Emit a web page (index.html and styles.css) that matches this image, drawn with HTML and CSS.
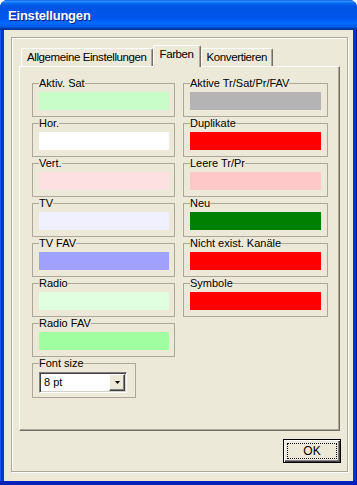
FILE: index.html
```html
<!DOCTYPE html>
<html lang="de">
<head>
  <meta charset="UTF-8">
  <meta name="viewport" content="width=device-width, initial-scale=1.0">
  <title>Einstellungen</title>
  <link rel="stylesheet" href="styles.css">
</head>
<body>
  <div class="window">
    <div class="titlebar"><span class="title">Einstellungen</span></div>
    <div class="client">
      <div class="frame">
        <div class="tabs">
          <div class="tab">Allgemeine Einstellungen</div>
          <div class="tab active">Farben</div>
          <div class="tab">Konvertieren</div>
        </div>
        <div class="page">
          <div class="column left">
            <fieldset class="group"><legend>Aktiv. Sat</legend><div class="swatch pale-green"></div></fieldset>
            <fieldset class="group"><legend>Hor.</legend><div class="swatch white"></div></fieldset>
            <fieldset class="group"><legend>Vert.</legend><div class="swatch pale-pink"></div></fieldset>
            <fieldset class="group"><legend>TV</legend><div class="swatch pale-blue"></div></fieldset>
            <fieldset class="group"><legend>TV FAV</legend><div class="swatch blue"></div></fieldset>
            <fieldset class="group"><legend>Radio</legend><div class="swatch mint"></div></fieldset>
            <fieldset class="group"><legend>Radio FAV</legend><div class="swatch green"></div></fieldset>
            <fieldset class="group font-size">
              <legend>Font size</legend>
              <div class="combo">
                <span class="combo-value">8 pt</span>
                <span class="drop">
                  <svg width="5" height="3" viewBox="0 0 5 3"><polygon points="0,0 5,0 2.5,3" fill="#000"/></svg>
                </span>
              </div>
            </fieldset>
          </div>
          <div class="column right">
            <fieldset class="group"><legend>Aktive Tr/Sat/Pr/FAV</legend><div class="swatch grey"></div></fieldset>
            <fieldset class="group"><legend>Duplikate</legend><div class="swatch red"></div></fieldset>
            <fieldset class="group"><legend>Leere Tr/Pr</legend><div class="swatch rose"></div></fieldset>
            <fieldset class="group"><legend>Neu</legend><div class="swatch dark-green"></div></fieldset>
            <fieldset class="group"><legend>Nicht exist. Kanäle</legend><div class="swatch red"></div></fieldset>
            <fieldset class="group"><legend>Symbole</legend><div class="swatch red"></div></fieldset>
          </div>
        </div>
        <div class="buttons">
          <button class="btn default"><span>OK</span></button>
        </div>
      </div>
    </div>
  </div>
</body>
</html>
```

FILE: styles.css
```css
* {
  box-sizing: border-box;
  margin: 0;
  padding: 0;
}
body {
  background: #fff;
  font-family: "Liberation Sans", Arial, sans-serif;
  font-size: 11px;
  color: #000;
}
.window {
  width: 357px;
  height: 485px;
  display: flex;
  flex-direction: column;
  background: #0831d9;
  border-bottom: 4px solid #0022b8;
  border-radius: 8px 8px 0 0;
  box-shadow: inset 1px 0 0 #0a5de8, inset -1px 0 0 #001ea0;
}
.titlebar {
  height: 30px;
  flex: none;
  padding: 8px 0 0 8px;
  border-radius: 8px 8px 0 0;
  background: linear-gradient(to bottom, #0058ee 0%, #3593ff 4%, #288eff 6%, #127dff 8%, #036ffc 10%, #0262ee 14%, #0057e5 20%, #0054e3 24%, #0055eb 56%, #005bf5 66%, #026afe 76%, #0062ef 86%, #0052d6 92%, #0040ab 94%, #003092 100%);
}
.title {
  color: #fff;
  font-weight: bold;
  font-size: 13px;
  line-height: 16px;
  letter-spacing: -0.2px;
  text-shadow: 1px 1px 0 #0f1e8c;
}
.client {
  flex: 1;
  margin: 0 4px;
  background: #ece9d8;
  padding: 7px 0 0 7px;
}
.frame {
  width: 337px;
  height: 435px;
  padding: 7px 7px 8px 7px;
  border: 1px solid #aca899;
  box-shadow: inset 1px 1px 0 #fff, 1px 1px 0 #fff;
  display: flex;
  flex-direction: column;
}
.tabs {
  display: flex;
  align-items: flex-end;
  height: 21px;
  flex: none;
  padding-left: 2px;
}
.tab {
  height: 18px;
  padding: 0 5px;
  border: 1px solid;
  border-color: #fff #716f64 transparent #fff;
  border-bottom: none;
  border-radius: 2px 2px 0 0;
  box-shadow: inset -1px 0 0 #aca899;
  font-size: 11.5px;
  line-height: 16px;
  letter-spacing: -0.4px;
  white-space: nowrap;
}
.tab.active {
  position: relative;
  z-index: 1;
  height: 22px;
  margin-bottom: -1px;
  padding: 0 6px;
  background: #ece9d8;
  line-height: 17px;
}
.page {
  flex: none;
  height: 365px;
  border: 1px solid;
  border-color: #fff #716f64 #716f64 #fff;
  box-shadow: inset -1px -1px 0 #aca899;
  padding: 10px 0 0 12px;
  display: grid;
  grid-template-columns: 143px 145px;
  column-gap: 8px;
  align-items: start;
}
.column {
  display: flex;
  flex-direction: column;
}
.group {
  border: 1px solid #aca899;
  padding: 2px 5px 6px 6px;
  min-width: 0;
}
.right .group {
  padding-right: 6px;
}
.group legend {
  padding: 0;
  line-height: 13px;
  white-space: nowrap;
}
.swatch {
  height: 18px;
}
.pale-green { background: #c8fcc8; }
.white { background: #fff; }
.pale-pink { background: #fde0e0; }
.pale-blue { background: #f0f0fe; }
.blue { background: #a0a0fe; }
.mint { background: #e0fee0; }
.green { background: #a0fea0; }
.grey { background: #b4b4b4; }
.red { background: #fe0000; }
.rose { background: #fec8c8; }
.dark-green { background: #008000; }

.font-size {
  width: 104px;
  padding-bottom: 4px;
}
.combo {
  display: flex;
  align-items: stretch;
  width: 88px;
  height: 21px;
  background: #fff;
  border: 1px solid;
  border-color: #808080 #fff #fff #808080;
  box-shadow: inset 1px 1px 0 #404040, inset -1px -1px 0 #d4d0c8;
  padding: 1px;
}
.combo-value {
  flex: 1;
  padding-left: 3px;
  line-height: 17px;
}
.drop {
  width: 16px;
  display: flex;
  align-items: center;
  justify-content: center;
  background: #ece9d8;
  border: 1px solid;
  border-color: #fff #404040 #404040 #fff;
  box-shadow: inset -1px -1px 0 #808080;
}
.drop svg {
  display: block;
}
.buttons {
  display: flex;
  justify-content: flex-end;
  margin-top: 8px;
  margin-right: -1px;
}
.btn {
  width: 58px;
  height: 24px;
  padding: 3px;
  border: 1px solid #000;
  background: #ece9d8;
  box-shadow: inset 1px 1px 0 #fff, inset -1px -1px 0 #404040, inset -2px -2px 0 #808080;
  font: inherit;
  font-size: 12px;
  color: #000;
}
.btn span {
  display: block;
  height: 100%;
  border: 1px dotted #000;
  line-height: 14px;
  text-align: center;
}
```
